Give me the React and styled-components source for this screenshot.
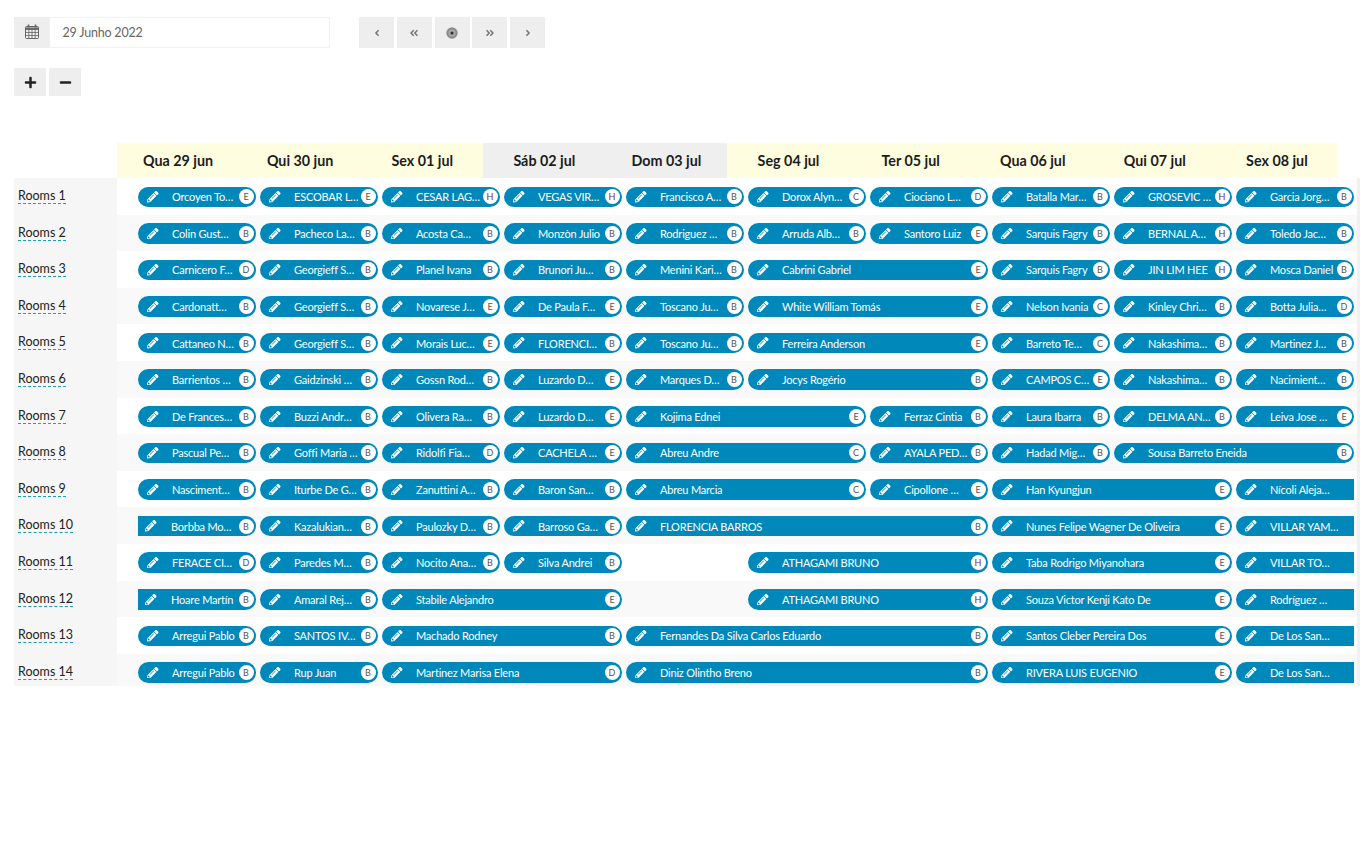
import React from "react";
import styled, { createGlobalStyle } from "styled-components";
import { FaPencilAlt, FaPlus, FaMinus, FaAngleLeft, FaAngleRight, FaAngleDoubleLeft, FaAngleDoubleRight } from "react-icons/fa";

const GlobalStyle = createGlobalStyle`
  html, body { margin: 0; padding: 0; background: #fff; }
  body { font-family: "Lato", "Noto Sans", sans-serif; color: #222; }
`;

const Page = styled.div`
  padding: 17px 0 0 14px;
`;
const Toolbar = styled.div`
  display: flex;
  height: 31px;
`;
const DateField = styled.div`
  display: flex;
  width: 316px;
  margin-right: 29px;
`;
const Addon = styled.div`
  width: 35px;
  background: #eee;
  display: flex;
  align-items: center;
  justify-content: center;
  padding-bottom: 2px;
  box-sizing: border-box;
`;
const DateInput = styled.div`
  flex: 1;
  box-sizing: border-box;
  border: 1px solid #f1f1f1;
  padding-left: 12.5px;
  display: flex;
  align-items: center;
  font-size: 12.5px;
  letter-spacing: -0.2px;
  color: #666;
`;
const NavGroup = styled.div`
  display: flex;
  gap: 2.75px;
`;
const NavButton = styled.div`
  width: 35px;
  background: #eee;
  color: #777;
  font-size: 10px;
  display: flex;
  align-items: center;
  justify-content: center;
`;
const ZoomGroup = styled.div`
  display: flex;
  gap: 3px;
  margin-top: 20px;
`;
const ZoomButton = styled.div`
  width: 32px;
  height: 28px;
  background: #eee;
  color: #222;
  font-size: 13px;
  display: flex;
  align-items: center;
  justify-content: center;
`;
const HeaderRow = styled.div`
  display: grid;
  grid-template-columns: repeat(10, 122.1px);
  margin: 47px 0 0 103px;
`;
const DayCell = styled.div`
  height: 35px;
  display: flex;
  align-items: center;
  justify-content: center;
  font-size: 14.3px;
  font-weight: 700;
  color: #1c1c1c;
  background: ${(p) => (p.$weekend ? "#efefef" : "#fffde0")};
`;
const Rows = styled.div`
  border-right: 3px solid #f1f1f1;
`;
const Row = styled.div`
  display: flex;
  height: 36.6px;
  background: ${(p) => (p.$even ? "#f9f9f9" : "#fff")};
  &:last-child {
    height: 32px;
  }
`;
const RoomCell = styled.div`
  width: 103px;
  flex: none;
  box-sizing: border-box;
  padding: 10px 0 0 4px;
  background: #f6f6f6;
`;
const RoomName = styled.span`
  font-size: 12.5px;
  line-height: 15px;
  display: block;
  width: fit-content;
  color: #222;
  border-bottom: 1px dashed #1f9fb5;
`;
const Track = styled.div`
  display: grid;
  grid-template-columns: repeat(10, 118px);
  column-gap: 4px;
  padding: 8.5px 0 0 21px;
  align-content: start;
`;
const Bar = styled.div`
  grid-column: span ${(p) => p.$span};
  height: 20.5px;
  box-sizing: border-box;
  background: #0088bb;
  color: #fff;
  display: flex;
  align-items: center;
  padding-left: ${(p) => (p.$flatLeft ? 7 : 9)}px;
  padding-right: 2.5px;
  border-radius: ${(p) => (p.$flatLeft ? "0" : "10.5px")} ${(p) => (p.$flatRight ? "0 0" : "10.5px 10.5px")} ${(p) => (p.$flatLeft ? "0" : "10.5px")};
`;
const Pencil = styled(FaPencilAlt)`
  width: 11.5px;
  height: 11.5px;
  flex: none;
  margin-right: ${(p) => (p.$flatLeft ? 14.5 : 13.5)}px;
`;
const BarName = styled.span`
  flex: 1;
  min-width: 0;
  font-size: 11px;
  letter-spacing: -0.2px;
  white-space: nowrap;
  overflow: hidden;
`;
const Badge = styled.span`
  flex: none;
  width: 15px;
  height: 15px;
  border-radius: 50%;
  background: #fff;
  color: ${(p) => (p.$kind === "H" ? "#6a2a6a" : "#555")};
  font-size: 9px;
  display: flex;
  align-items: center;
  justify-content: center;
`;
const Spacer = styled.div`
  grid-column: span ${(p) => p.$span};
`;

const days = [
  ["Qua 29 jun"], ["Qui 30 jun"], ["Sex 01 jul"], ["Sáb 02 jul", true], ["Dom 03 jul", true],
  ["Seg 04 jul"], ["Ter 05 jul"], ["Qua 06 jul"], ["Qui 07 jul"], ["Sex 08 jul"],
];

// [name, badge, span, flags]  flags: "l" flat left, "r" flat right, no name = empty gap
const rooms = [
  [["Orcoyen To…", "E"], ["ESCOBAR L…", "E"], ["CESAR LAG…", "H"], ["VEGAS VIR…", "H"], ["Francisco A…", "B"], ["Dorox Alyn…", "C"], ["Ciociano L…", "D"], ["Batalla Mar…", "B"], ["GROSEVIC …", "H"], ["Garcia Jorg…", "B"]],
  [["Colin Gust…", "B"], ["Pacheco La…", "B"], ["Acosta Ca…", "B"], ["Monzòn Julio", "B"], ["Rodriguez …", "B"], ["Arruda Alb…", "B"], ["Santoro Luiz", "E"], ["Sarquis Fagry", "B"], ["BERNAL A…", "H"], ["Toledo Jac…", "B"]],
  [["Carnicero F…", "D"], ["Georgieff S…", "B"], ["Planel Ivana", "B"], ["Brunori Ju…", "B"], ["Menini Kari…", "B"], ["Cabrini Gabriel", "E", 2], ["Sarquis Fagry", "B"], ["JIN LIM HEE", "H"], ["Mosca Daniel", "B"]],
  [["Cardonatt…", "B"], ["Georgieff S…", "B"], ["Novarese J…", "E"], ["De Paula F…", "E"], ["Toscano Ju…", "B"], ["White William Tomás", "E", 2], ["Nelson Ivania", "C"], ["Kinley Chri…", "B"], ["Botta Julia…", "D"]],
  [["Cattaneo N…", "B"], ["Georgieff S…", "B"], ["Morais Luc…", "E"], ["FLORENCI…", "B"], ["Toscano Ju…", "B"], ["Ferreira Anderson", "E", 2], ["Barreto Te…", "C"], ["Nakashima…", "B"], ["Martinez J…", "B"]],
  [["Barrientos …", "B"], ["Gaidzinski …", "B"], ["Gossn Rod…", "B"], ["Luzardo D…", "E"], ["Marques D…", "B"], ["Jocys Rogério", "B", 2], ["CAMPOS C…", "E"], ["Nakashima…", "B"], ["Nacimient…", "B"]],
  [["De Frances…", "B"], ["Buzzi Andr…", "B"], ["Olivera Ra…", "B"], ["Luzardo D…", "E"], ["Kojima Ednei", "E", 2], ["Ferraz Cintia", "B"], ["Laura Ibarra", "B"], ["DELMA AN…", "B"], ["Leiva Jose …", "E"]],
  [["Pascual Pe…", "B"], ["Goffi Maria …", "B"], ["Ridolfi Fia…", "D"], ["CACHELA …", "E"], ["Abreu Andre", "C", 2], ["AYALA PED…", "B"], ["Hadad Mig…", "B"], ["Sousa Barreto Eneida", "B", 2]],
  [["Nasciment…", "B"], ["Iturbe De G…", "B"], ["Zanuttini A…", "B"], ["Baron San…", "B"], ["Abreu Marcia", "C", 2], ["Cipollone …", "E"], ["Han Kyungjun", "E", 2], ["Nícoli Aleja…", null, 1, "r"]],
  [["Borbba Mo…", "B", 1, "l"], ["Kazalukian…", "B"], ["Paulozky D…", "B"], ["Barroso Ga…", "E"], ["FLORENCIA BARROS", "B", 3], ["Nunes Felipe Wagner De Oliveira", "E", 2], ["VILLAR YAM…", null, 1, "r"]],
  [["FERACE CI…", "D"], ["Paredes M…", "B"], ["Nocito Ana…", "B"], ["Silva Andrei", "B"], [null, null, 1], ["ATHAGAMI BRUNO", "H", 2], ["Taba Rodrigo Miyanohara", "E", 2], ["VILLAR TO…", null, 1, "r"]],
  [["Hoare Martín", "B", 1, "l"], ["Amaral Rej…", "B"], ["Stabile Alejandro", "E", 2], [null, null, 1], ["ATHAGAMI BRUNO", "H", 2], ["Souza Victor Kenji Kato De", "E", 2], ["Rodríguez …", null, 1, "r"]],
  [["Arregui Pablo", "B"], ["SANTOS IV…", "B"], ["Machado Rodney", "B", 2], ["Fernandes Da Silva Carlos Eduardo", "B", 3], ["Santos Cleber Pereira Dos", "E", 2], ["De Los San…", null, 1, "r"]],
  [["Arregui Pablo", "B"], ["Rup Juan", "B"], ["Martinez Marisa Elena", "D", 2], ["Diniz Olintho Breno", "B", 3], ["RIVERA LUIS EUGENIO", "E", 2], ["De Los San…", null, 1, "r"]],
];

const CalendarIcon = () => (
  <svg width="14" height="15" viewBox="0 0 14 15" fill="none" stroke="#666" strokeWidth="1">
    <rect x="0.5" y="2.5" width="13" height="12" rx="1" />
    <path d="M0.5 5.5h13M0.5 8.5h13M0.5 11.5h13M3.8 5.5v9M7 5.5v9M10.2 5.5v9" strokeWidth="0.8" />
    <path d="M0.5 4.5h13" strokeWidth="2" />
    <path d="M3.5 0.5v3M10.5 0.5v3" strokeWidth="1.6" />
  </svg>
);

const TodayIcon = () => (
  <svg width="12" height="12" viewBox="0 0 12 12">
    <circle cx="6" cy="6" r="5.7" fill="#8c8c8c" />
    <circle cx="6" cy="6" r="3.6" fill="#a8a8a8" />
    <circle cx="6" cy="6" r="1.6" fill="#333" />
  </svg>
);

const Reservation = ({ name, kind, span = 1, flags = "" }) => {
  if (!name) return <Spacer $span={span} />;
  const flatLeft = flags.includes("l");
  const flatRight = flags.includes("r");
  return (
    <Bar $span={span} $flatLeft={flatLeft} $flatRight={flatRight}>
      <Pencil $flatLeft={flatLeft} />
      <BarName>{name}</BarName>
      {kind && <Badge $kind={kind}>{kind}</Badge>}
    </Bar>
  );
};

const App = () => (
  <Page>
    <GlobalStyle />
    <Toolbar>
      <DateField>
        <Addon><CalendarIcon /></Addon>
        <DateInput>29 Junho 2022</DateInput>
      </DateField>
      <NavGroup>
        <NavButton><FaAngleLeft /></NavButton>
        <NavButton><FaAngleDoubleLeft /></NavButton>
        <NavButton><TodayIcon /></NavButton>
        <NavButton><FaAngleDoubleRight /></NavButton>
        <NavButton><FaAngleRight /></NavButton>
      </NavGroup>
    </Toolbar>
    <ZoomGroup>
      <ZoomButton><FaPlus /></ZoomButton>
      <ZoomButton><FaMinus /></ZoomButton>
    </ZoomGroup>
    <HeaderRow>
      {days.map(([label, weekend]) => (
        <DayCell key={label} $weekend={weekend}>{label}</DayCell>
      ))}
    </HeaderRow>
    <Rows>
      {rooms.map((bars, i) => (
        <Row key={i} $even={i % 2 === 1}>
          <RoomCell><RoomName>Rooms {i + 1}</RoomName></RoomCell>
          <Track>
            {bars.map(([name, kind, span, flags], j) => (
              <Reservation key={j} name={name} kind={kind} span={span} flags={flags} />
            ))}
          </Track>
        </Row>
      ))}
    </Rows>
  </Page>
);

export default App;
